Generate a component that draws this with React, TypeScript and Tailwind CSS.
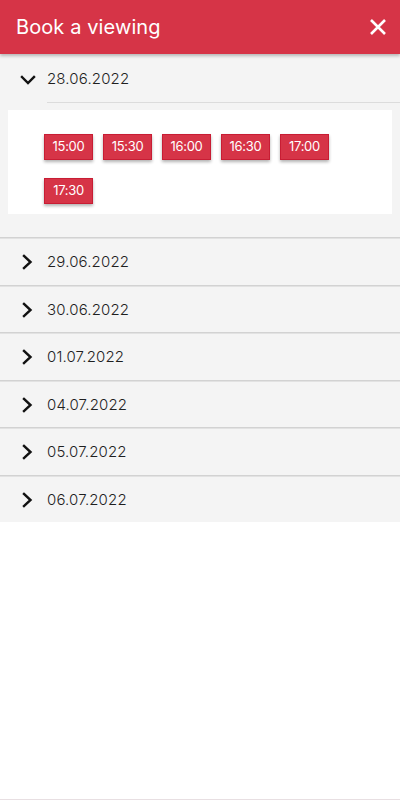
import React from "react";

const RED = "bg-[#d63447]";

function ChevronRight() {
  return (
    <svg width="14" height="16" viewBox="0 0 14 16" fill="none">
      <path d="M4 2 L10.5 8 L4 14" stroke="#111" strokeWidth="2.4" strokeLinecap="square" />
    </svg>
  );
}

function ChevronDown() {
  return (
    <svg width="16" height="12" viewBox="0 0 16 12" fill="none">
      <path d="M2 3 L8 9 L14 3" stroke="#111" strokeWidth="2.4" strokeLinecap="square" />
    </svg>
  );
}

const times = ["15:00", "15:30", "16:00", "16:30", "17:00", "17:30"];
const dates = ["29.06.2022", "30.06.2022", "01.07.2022", "04.07.2022", "05.07.2022", "06.07.2022"];

export default function App() {
  return (
    <div
      className="w-[400px] h-[800px] flex flex-col bg-white text-[#222]"
      style={{ fontFamily: "Inter, 'Open Sans', sans-serif" }}
    >
      <div className={`h-[54px] shrink-0 ${RED} flex items-center justify-between pl-4 pr-[13px] shadow-[0_2px_3px_rgba(0,0,0,0.25)] relative z-10`}>
        <span className="text-white text-[20px] tracking-[0.1px]">Book a viewing</span>
        <svg width="18" height="18" viewBox="0 0 18 18" fill="none">
          <path d="M2 2 L16 16 M16 2 L2 16" stroke="#fff" strokeWidth="2.6" />
        </svg>
      </div>

      <div className="bg-[#f4f4f4]">
        <div className="h-[48px] flex items-center">
          <div className="w-[47px] flex pl-[20px] pt-[3px]">
            <ChevronDown />
          </div>
          <span className="text-[15px] font-light text-[#1f1f1f] pt-[2px] tracking-[0.15px]">28.06.2022</span>
        </div>
        <div className="ml-[47px] h-px bg-[#dcdcdc]" />
        <div className="pt-[7px] px-2 pb-[23px]">
          <div className="bg-white pt-6 pl-9 pr-4 pb-[10px] flex flex-wrap gap-x-[10px] gap-y-[18px]">
            {times.map((t) => (
              <div
                key={t}
                className={`w-[49px] h-[26px] ${RED} border border-[#c81d34] text-white text-[13px] flex items-center justify-center shadow-[0_2px_3px_rgba(0,0,0,0.3)] tracking-[-0.3px]`}
              >
                {t}
              </div>
            ))}
          </div>
        </div>
      </div>

      {dates.map((d) => (
        <div key={d} className="h-[47.5px] bg-[#f4f4f4] border-t border-[#d2d2d2] shadow-[inset_0_1px_0_#e2e2e2] flex items-center pt-[2px]">
          <div className="w-[47px] flex pl-[20px]">
            <ChevronRight />
          </div>
          <span className="text-[15px] font-light text-[#1f1f1f] tracking-[0.15px]">{d}</span>
        </div>
      ))}

      <div className="flex-1 border-b border-[#e8dfe2]" />
    </div>
  );
}
